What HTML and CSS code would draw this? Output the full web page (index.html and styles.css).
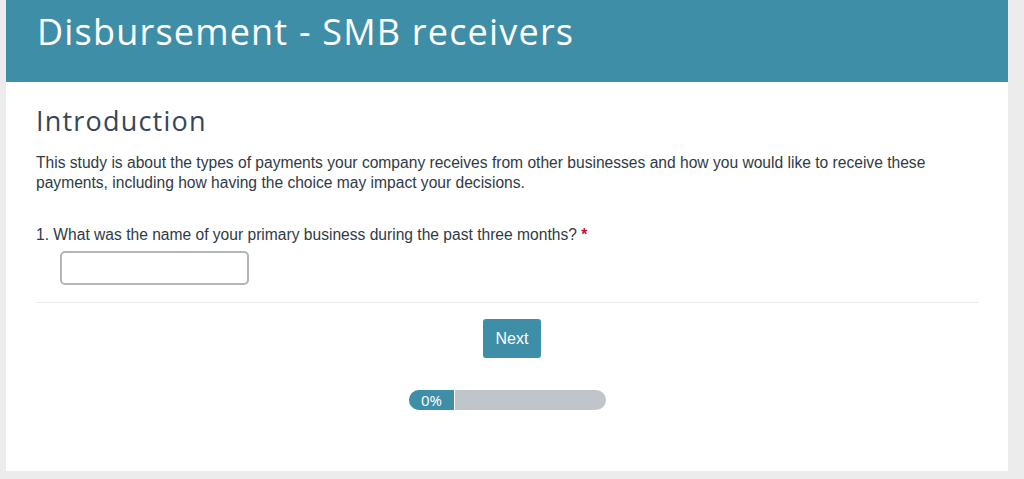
FILE: index.html
```html
<!DOCTYPE html>
<html lang="en">
<head>
    <meta charset="UTF-8">
    <title>Disbursement - SMB receivers</title>
    <link rel="stylesheet" href="styles.css">
</head>
<body>
<div class="page">
    <div class="survey">
        <div class="header">
            <h1>Disbursement - SMB receivers</h1>
        </div>
        <div class="content">
            <h2>Introduction</h2>
            <p class="intro">This study is about the types of payments your company receives from other businesses and how you would like to receive these payments, including how having the choice may impact your decisions.</p>
            <div class="question">
                <label for="q1">1. What was the name of your primary business during the past three months? <span class="req">*</span></label>
                <input type="text" id="q1">
            </div>
            <div class="nav">
                <button>Next</button>
            </div>
            <div class="progress">
                <div class="bar"><div class="fill" style="width: 45px">0%</div></div>
            </div>
        </div>
    </div>
</div>
</body>
</html>
```

FILE: styles.css
```css
body { background: #ececec; margin: 0; font-family: 'Liberation Sans', Arial, sans-serif; }
.page { padding: 0 16px 8px 6px; }
.survey { background: #fff; height: 471px; }
.header { background: #3f8ea8; height: 82px; padding: 14px 30px 0 31px; box-sizing: border-box; }
h1 { margin: 0; color: #fff; font-family: 'Open Sans', sans-serif; font-weight: 400; font-size: 36px; line-height: 35px; letter-spacing: 1.2px; }
.content { padding: 26px 29px 0 30px; }
h2 { margin: 0 0 19px 0; font-family: 'Open Sans', sans-serif; font-weight: 400; font-size: 27px; line-height: 26px; letter-spacing: 1.2px; color: #364758; }
.intro { margin: 0; font-size: 15.6px; line-height: 20px; color: #2f3a46; }
.question { margin-top: 32px; padding-bottom: 17px; border-bottom: 1px solid #ebebeb; }
label { display: block; font-size: 15.6px; line-height: 20px; color: #2f3a46; margin-bottom: 6px; }
.req { color: #c4122f; font-weight: 700; }
input { margin-left: 24px; width: 189px; height: 34px; box-sizing: border-box; border: 2px solid #b2b6bb; border-radius: 5px; }
.nav { display: flex; justify-content: center; padding: 16px 0 0 9px; }
button { background: #3f8ea8; color: #fff; border: none; border-radius: 3px; width: 58px; height: 39px; font-family: 'Liberation Sans', Arial, sans-serif; font-size: 16px; padding: 0; }
.progress { display: flex; justify-content: center; margin-top: 32px; }
.bar { width: 197px; height: 20px; background: #c0c5cb; border-radius: 10px; overflow: hidden; }
.fill { height: 100%; background: #3f8ea8; border-right: 1px solid #fff; color: #fff; font-family: 'Open Sans', sans-serif; font-size: 15px; line-height: 20px; text-align: center; }
```
